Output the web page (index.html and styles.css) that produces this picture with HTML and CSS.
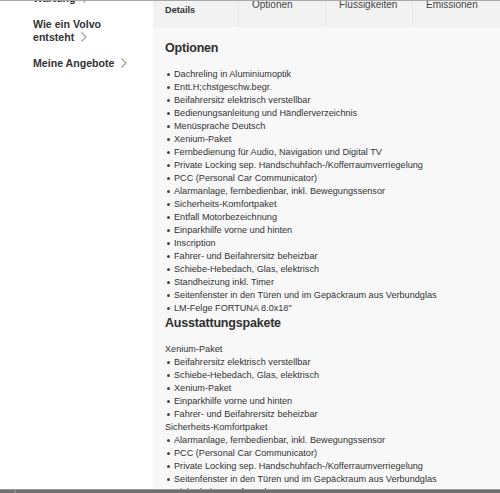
FILE: index.html
```html
<!DOCTYPE html>
<html lang="de">
<head>
<meta charset="utf-8">
<link rel="stylesheet" href="styles.css">
</head>
<body>
<div class="topline"></div>
<div class="page">
  <nav class="sidebar">
    <ul class="nav">
      <li>Wartung<svg class="chev" width="6" height="10" viewBox="0 0 6 10"><polyline points="0.5,0.5 5,5 0.5,9.5" fill="none" stroke="#9a9a9a" stroke-width="1.1"/></svg></li>
      <li>Wie ein Volvo<br>entsteht<svg class="chev" width="6" height="10" viewBox="0 0 6 10"><polyline points="0.5,0.5 5,5 0.5,9.5" fill="none" stroke="#9a9a9a" stroke-width="1.1"/></svg></li>
      <li>Meine Angebote<svg class="chev" width="6" height="10" viewBox="0 0 6 10"><polyline points="0.5,0.5 5,5 0.5,9.5" fill="none" stroke="#9a9a9a" stroke-width="1.1"/></svg></li>
    </ul>
  </nav>
  <main class="panel">
    <div class="tabs">
      <div class="tab active">Details</div>
      <div class="tab">Optionen</div>
      <div class="tab">Flüssigkeiten</div>
      <div class="tab last">Emissionen</div>
    </div>
    <div class="content">
      <h2>Optionen</h2>
      <ul class="list">
        <li>Dachreling in Aluminiumoptik</li>
        <li>Entt.H;chstgeschw.begr.</li>
        <li>Beifahrersitz elektrisch verstellbar</li>
        <li>Bedienungsanleitung und Händlerverzeichnis</li>
        <li>Menüsprache Deutsch</li>
        <li>Xenium-Paket</li>
        <li>Fernbedienung für Audio, Navigation und Digital TV</li>
        <li>Private Locking sep. Handschuhfach-/Kofferraumverriegelung</li>
        <li>PCC (Personal Car Communicator)</li>
        <li>Alarmanlage, fernbedienbar, inkl. Bewegungssensor</li>
        <li>Sicherheits-Komfortpaket</li>
        <li>Entfall Motorbezeichnung</li>
        <li>Einparkhilfe vorne und hinten</li>
        <li>Inscription</li>
        <li>Fahrer- und Beifahrersitz beheizbar</li>
        <li>Schiebe-Hebedach, Glas, elektrisch</li>
        <li>Standheizung inkl. Timer</li>
        <li>Seitenfenster in den Türen und im Gepäckraum aus Verbundglas</li>
        <li>LM-Felge FORTUNA 8.0x18"</li>
      </ul>
      <h2>Ausstattungspakete</h2>
      <div class="pkg">Xenium-Paket</div>
      <ul class="list">
        <li>Beifahrersitz elektrisch verstellbar</li>
        <li>Schiebe-Hebedach, Glas, elektrisch</li>
        <li>Xenium-Paket</li>
        <li>Einparkhilfe vorne und hinten</li>
        <li>Fahrer- und Beifahrersitz beheizbar</li>
      </ul>
      <div class="pkg">Sicherheits-Komfortpaket</div>
      <ul class="list">
        <li>Alarmanlage, fernbedienbar, inkl. Bewegungssensor</li>
        <li>PCC (Personal Car Communicator)</li>
        <li>Private Locking sep. Handschuhfach-/Kofferraumverriegelung</li>
        <li>Seitenfenster in den Türen und im Gepäckraum aus Verbundglas</li>
        <li>Sicherheits-Komfortpaket</li>
      </ul>
    </div>
  </main>
</div>
<div class="bottombar"></div>
</body>
</html>
```

FILE: styles.css
```css
html, body {
  margin: 0;
  padding: 0;
  height: 493px;
  overflow: hidden;
  background: #ffffff;
  font-family: "Liberation Sans", Arial, sans-serif;
  color: #333333;
}

.topline {
  position: fixed;
  top: 0;
  left: 0;
  right: 0;
  height: 1px;
  background: #a8a8a8;
  z-index: 5;
}

.bottombar {
  position: fixed;
  left: 0;
  right: 0;
  bottom: 0;
  height: 3px;
  background: linear-gradient(to right, #6f6f6f 0, #6f6f6f 14px, #8a8a8a 14px, #8a8a8a 16px, #6f6f6f 16px);
  border-top: 1px solid #9a9a9a;
  z-index: 5;
}

.page {
  display: flex;
  align-items: stretch;
  min-height: 493px;
}

.sidebar {
  width: 153px;
  flex: 0 0 153px;
  background: #ffffff;
}

.nav {
  list-style: none;
  margin: -8px 0 0 0;
  padding: 0 0 0 33px;
}

.nav li {
  font-size: 10.6px;
  font-weight: bold;
  line-height: 13px;
  margin-bottom: 13px;
  color: #333333;
}

.chev {
  display: inline-block;
  vertical-align: -1px;
  margin-left: 7px;
}

.panel {
  flex: 1 1 auto;
  background: #f8f8f8;
  min-width: 0;
}

.tabs {
  display: flex;
  height: 26px;
  background: #f2f2f2;
  border-bottom: 1px solid #f0f0f0;
}

.tab {
  width: 88px;
  box-sizing: border-box;
  padding: 0 0 0 13px;
  margin-top: -2px;
  font-size: 10px;
  line-height: 13px;
  color: #444444;
  border-right: 1px solid #e8e8e8;
}

.tab.active {
  width: 87px;
  margin-top: 0;
  padding: 4px 0 0 12px;
  font-size: 9.2px;
  font-weight: bold;
  color: #333333;
}

.tab.last {
  flex: 1 1 auto;
  border-right: none;
  padding-left: 13px;
}

.content {
  padding: 13px 0 0 12px;
}

h2 {
  margin: 0 0 12px 0;
  font-size: 12.5px;
  line-height: 16px;
  font-weight: bold;
  letter-spacing: -0.2px;
  color: #2f2f2f;
}

.list {
  list-style: none;
  margin: 0;
  padding: 0 0 0 2px;
}

.list li,
.pkg {
  font-size: 9.15px;
  line-height: 13px;
  color: #333333;
  white-space: nowrap;
}

.list li {
  display: flex;
  align-items: center;
}

.list li::before {
  content: "";
  width: 3px;
  height: 3px;
  border-radius: 50%;
  background: #444444;
  margin-right: 4px;
  flex: 0 0 auto;
}
```
